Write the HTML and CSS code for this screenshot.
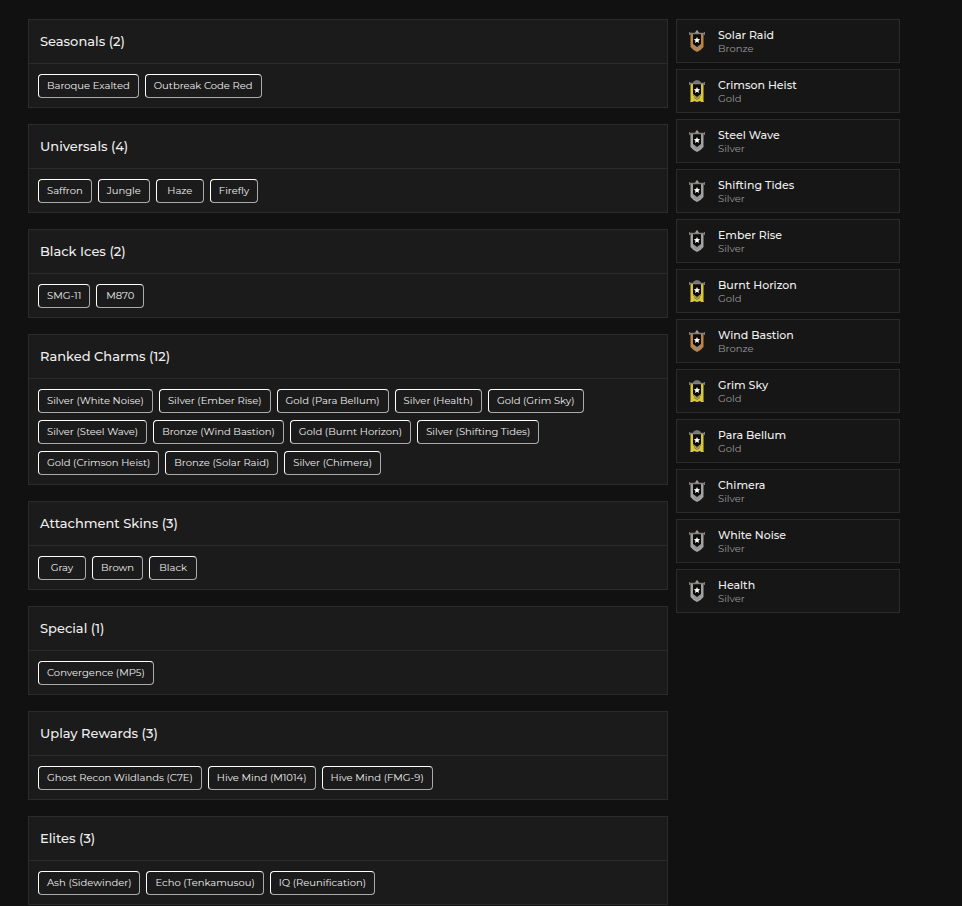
FILE: index.html
```
<!DOCTYPE html>
<html lang="en">
<head>
    <meta charset="UTF-8">
    <meta name="viewport" content="width=device-width, initial-scale=1.0">
    <title>Inventory</title>
    <link rel="stylesheet" href="styles.css">
</head>
<body>
    <!-- rank icons, coloured through currentColor -->
    <svg class="sprite" aria-hidden="true">
        <symbol id="shield" viewBox="0 0 18 24">
            <path d="M2.500 5h13v13l-3 3-3.500 2-3.500-2-3-3z" fill="currentColor"/>
            <path d="M5 5h8v10l-4 3-4-3z" fill="#0b0b0b"/>
            <path d="M5 16l4 3 4-3M6 18.500l3 2 3-2" fill="none" stroke="#8c8c8c"/>
            <path d="M1 4.500h16" stroke="#85827e" stroke-width="1.500"/>
            <path d="M1.500 3v3M16.500 3v3" stroke="#777"/>
            <path d="M7 4l1-2 1-1 1 1 1 2z" fill="#999"/>
            <path d="M9 8l.9 2.100 2.300.2-1.700 1.500.5 2.200L9 12.800 7 14l.5-2.200-1.700-1.500 2.300-.2z" fill="#fff"/>
        </symbol>
        <symbol id="banner" viewBox="0 0 18 24">
            <path d="M2.500 5h13v17l.5 1h-3l-1-1-3 1-3-1-1 1H2l.5-1z" fill="currentColor"/>
            <path d="M5 5h8v10l-4 3-4-3z" fill="#0b0b0b"/>
            <path d="M5 16l4 3 4-3M6 18.500l3 2 3-2" fill="none" stroke="#77735a"/>
            <path d="M1 4.500h16" stroke="#85827e" stroke-width="1.500"/>
            <path d="M1.500 3v3M16.500 3v3" stroke="#777"/>
            <path d="M5 4l1-2 3-1 3 1 1 2z" fill="#777"/>
            <path d="M9 8l.9 2.100 2.300.2-1.700 1.500.5 2.200L9 12.800 7 14l.5-2.200-1.700-1.500 2.300-.2z" fill="#fff"/>
        </symbol>
    </svg>

    <div class="container">
        <main class="items">
            <section class="panel">
                <h2>Seasonals (2)</h2>
                <div class="tags">
                    <button>Baroque Exalted</button>
                    <button>Outbreak Code Red</button>
                </div>
            </section>

            <section class="panel">
                <h2>Universals (4)</h2>
                <div class="tags">
                    <button>Saffron</button>
                    <button>Jungle</button>
                    <button>Haze</button>
                    <button>Firefly</button>
                </div>
            </section>

            <section class="panel">
                <h2>Black Ices (2)</h2>
                <div class="tags">
                    <button>SMG-11</button>
                    <button>M870</button>
                </div>
            </section>

            <section class="panel">
                <h2>Ranked Charms (12)</h2>
                <div class="tags">
                    <button>Silver (White Noise)</button>
                    <button>Silver (Ember Rise)</button>
                    <button>Gold (Para Bellum)</button>
                    <button>Silver (Health)</button>
                    <button>Gold (Grim Sky)</button>
                    <button>Silver (Steel Wave)</button>
                    <button>Bronze (Wind Bastion)</button>
                    <button>Gold (Burnt Horizon)</button>
                    <button>Silver (Shifting Tides)</button>
                    <button>Gold (Crimson Heist)</button>
                    <button>Bronze (Solar Raid)</button>
                    <button>Silver (Chimera)</button>
                </div>
            </section>

            <section class="panel">
                <h2>Attachment Skins (3)</h2>
                <div class="tags">
                    <button>Gray</button>
                    <button>Brown</button>
                    <button>Black</button>
                </div>
            </section>

            <section class="panel">
                <h2>Special (1)</h2>
                <div class="tags">
                    <button>Convergence (MP5)</button>
                </div>
            </section>

            <section class="panel">
                <h2>Uplay Rewards (3)</h2>
                <div class="tags">
                    <button>Ghost Recon Wildlands (C7E)</button>
                    <button>Hive Mind (M1014)</button>
                    <button>Hive Mind (FMG-9)</button>
                </div>
            </section>

            <section class="panel">
                <h2>Elites (3)</h2>
                <div class="tags">
                    <button>Ash (Sidewinder)</button>
                    <button>Echo (Tenkamusou)</button>
                    <button>IQ (Reunification)</button>
                </div>
            </section>
        </main>

        <aside class="ranks">
            <div class="rank">
                <svg class="bronze"><use href="#shield"/></svg>
                <div>
                    <h3>Solar Raid</h3>
                    <p>Bronze</p>
                </div>
            </div>
            <div class="rank">
                <svg class="gold"><use href="#banner"/></svg>
                <div>
                    <h3>Crimson Heist</h3>
                    <p>Gold</p>
                </div>
            </div>
            <div class="rank">
                <svg class="silver"><use href="#shield"/></svg>
                <div>
                    <h3>Steel Wave</h3>
                    <p>Silver</p>
                </div>
            </div>
            <div class="rank">
                <svg class="silver"><use href="#shield"/></svg>
                <div>
                    <h3>Shifting Tides</h3>
                    <p>Silver</p>
                </div>
            </div>
            <div class="rank">
                <svg class="silver"><use href="#shield"/></svg>
                <div>
                    <h3>Ember Rise</h3>
                    <p>Silver</p>
                </div>
            </div>
            <div class="rank">
                <svg class="gold"><use href="#banner"/></svg>
                <div>
                    <h3>Burnt Horizon</h3>
                    <p>Gold</p>
                </div>
            </div>
            <div class="rank">
                <svg class="bronze"><use href="#shield"/></svg>
                <div>
                    <h3>Wind Bastion</h3>
                    <p>Bronze</p>
                </div>
            </div>
            <div class="rank">
                <svg class="gold"><use href="#banner"/></svg>
                <div>
                    <h3>Grim Sky</h3>
                    <p>Gold</p>
                </div>
            </div>
            <div class="rank">
                <svg class="gold"><use href="#banner"/></svg>
                <div>
                    <h3>Para Bellum</h3>
                    <p>Gold</p>
                </div>
            </div>
            <div class="rank">
                <svg class="silver"><use href="#shield"/></svg>
                <div>
                    <h3>Chimera</h3>
                    <p>Silver</p>
                </div>
            </div>
            <div class="rank">
                <svg class="silver"><use href="#shield"/></svg>
                <div>
                    <h3>White Noise</h3>
                    <p>Silver</p>
                </div>
            </div>
            <div class="rank">
                <svg class="silver"><use href="#shield"/></svg>
                <div>
                    <h3>Health</h3>
                    <p>Silver</p>
                </div>
            </div>
        </aside>
    </div>
</body>
</html>
```
FILE: styles.css
```
* {
    box-sizing: border-box;
}

body {
    margin: 0;
    background: #111;
    color: #eee;
    font-family: Montserrat, Inter, sans-serif;
}

h2, h3, p {
    margin: 0;
}

.sprite {
    display: none;
}

.container {
    display: grid;
    grid-template-columns: 20fr 7fr;
    gap: 8px;
    align-items: start;
    padding: 19px 62px 16px 28px;
}

.items {
    display: grid;
    gap: 16px;
}

.panel {
    background: #1b1b1b;
    border: 1px solid #2b2b2b;
}

.panel h2 {
    padding: 0 11px;
    border-bottom: 1px solid #2b2b2b;
    font-size: 13px;
    font-weight: 500;
    line-height: 43px;
}

.tags {
    display: flex;
    flex-wrap: wrap;
    gap: 7px 6px;
    padding: 10px 9px 9px;
}

.tags button {
    min-width: 48px;
    height: 24px;
    padding: 0 8px;
    border: 1px solid;
    border-color: #fff #aaa #aaa #fff;
    border-radius: 4px;
    background: none;
    color: #eee;
    font-family: inherit;
    font-size: 10px;
    line-height: 22px;
}

.ranks {
    display: grid;
    gap: 6px;
}

.rank {
    display: flex;
    align-items: center;
    gap: 12px;
    height: 44px;
    padding: 0 11px;
    background: #161616;
    border: 1px solid #2b2b2b;
}

.rank svg {
    width: 18px;
    height: 24px;
}

.rank h3 {
    font-size: 11px;
    font-weight: 500;
    line-height: 14px;
}

.rank p {
    color: #999;
    font-size: 10px;
    line-height: 13px;
}

.bronze {
    color: #bd8344;
}

.gold {
    color: #d8c839;
}

.silver {
    color: #a2a2a2;
}
```
